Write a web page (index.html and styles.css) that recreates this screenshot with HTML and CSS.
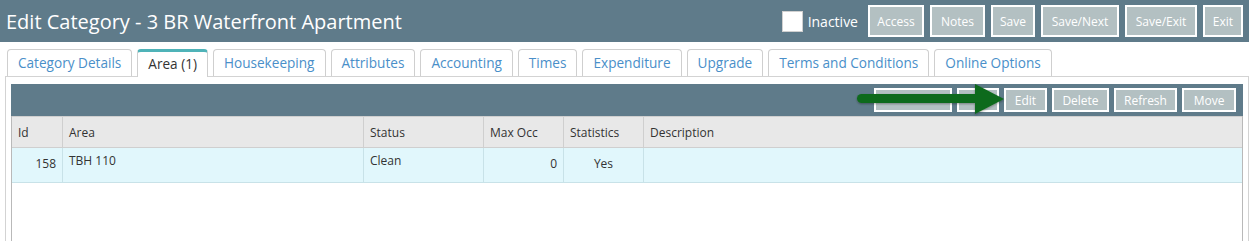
FILE: index.html
```html
<!DOCTYPE html>
<html>
<head>
<meta charset="utf-8">
<link rel="stylesheet" href="styles.css">
</head>
<body>
<header class="topbar">
  <h1 class="title">Edit Category - 3 BR Waterfront Apartment</h1>
  <div class="actions">
    <label class="inactive"><span class="checkbox"></span>Inactive</label>
    <button class="hbtn w-access">Access</button>
    <button class="hbtn w-notes">Notes</button>
    <button class="hbtn w-save">Save</button>
    <button class="hbtn w-savenext">Save/Next</button>
    <button class="hbtn w-saveexit">Save/Exit</button>
    <button class="hbtn w-exit">Exit</button>
  </div>
</header>

<nav class="tabs">
  <a class="tab">Category Details</a>
  <a class="tab active">Area (1)</a>
  <a class="tab">Housekeeping</a>
  <a class="tab">Attributes</a>
  <a class="tab">Accounting</a>
  <a class="tab">Times</a>
  <a class="tab">Expenditure</a>
  <a class="tab">Upgrade</a>
  <a class="tab">Terms and Conditions</a>
  <a class="tab">Online Options</a>
</nav>

<section class="panel">
  <div class="toolbar">
    <button class="tbtn w-addx">Add Existing</button>
    <button class="tbtn w-add">Add</button>
    <button class="tbtn w-edit">Edit</button>
    <button class="tbtn w-delete">Delete</button>
    <button class="tbtn w-refresh">Refresh</button>
    <button class="tbtn w-move">Move</button>
    <svg class="arrow" width="156" height="34" viewBox="0 0 156 34">
      <defs>
        <filter id="sh" x="-10%" y="-30%" width="120%" height="160%">
          <feDropShadow dx="0" dy="1" stdDeviation="1.2" flood-color="#000" flood-opacity="0.35"/>
        </filter>
      </defs>
      <g filter="url(#sh)" fill="#116a1d">
        <rect x="3" y="10" width="125" height="9" rx="4.5"/>
        <polygon points="121,0 150,15 121,30"/>
      </g>
    </svg>
  </div>
  <div class="grid">
    <div class="row head">
      <div class="c c-id">Id</div>
      <div class="c c-area">Area</div>
      <div class="c c-status">Status</div>
      <div class="c c-max">Max Occ</div>
      <div class="c c-stat">Statistics</div>
      <div class="c c-desc">Description</div>
    </div>
    <div class="row data">
      <div class="c c-id num mid">158</div>
      <div class="c c-area">TBH 110</div>
      <div class="c c-status">Clean</div>
      <div class="c c-max num mid">0</div>
      <div class="c c-stat center mid">Yes</div>
      <div class="c c-desc"></div>
    </div>
  </div>
</section>
</body>
</html>
```

FILE: styles.css
```css
* { box-sizing: border-box; }
html, body { margin: 0; padding: 0; }
body {
  font-family: "Open Sans", "Liberation Sans", sans-serif;
  background: #fff;
  color: #333;
  width: 1249px;
  height: 241px;
  overflow: hidden;
}
button { font-family: inherit; cursor: pointer; }

.topbar {
  height: 42px;
  background: #5f7b8a;
  display: flex;
  align-items: center;
  justify-content: space-between;
  padding: 0 6px 0 6px;
}
.title {
  margin: 0;
  font-size: 20px;
  font-weight: 400;
  color: #fff;
}
.actions {
  display: flex;
  align-items: center;
  gap: 6px;
}
.inactive {
  display: flex;
  align-items: center;
  color: #fff;
  font-size: 14px;
  margin-right: 4px;
}
.checkbox {
  width: 21px;
  height: 21px;
  background: #fff;
  border: 1px solid #d0d0d0;
  margin-right: 5px;
}
.hbtn {
  height: 32px;
  background: #b3c0c2;
  border: 2px solid #fff;
  color: #fff;
  font-size: 12px;
  padding: 0;
}
.w-access { width: 56px; }
.w-notes { width: 55px; }
.w-save { width: 44px; }
.w-savenext { width: 78px; }
.w-saveexit { width: 72px; }
.w-exit { width: 40px; }

.tabs {
  display: flex;
  gap: 5px;
  padding: 7px 0 0 7px;
  position: relative;
  z-index: 2;
  margin-bottom: -1px;
}
.tab {
  height: 27px;
  border: 1px solid #cfcfcf;
  border-bottom: none;
  border-radius: 4px 4px 0 0;
  padding: 0 10px;
  font-size: 13.6px;
  color: #4a8fc9;
  line-height: 25px;
  background: #fff;
}
.tab.active {
  color: #333;
  border-top: 3px solid #4fb3b8;
  line-height: 23px;
  height: 28px;
}

.panel {
  margin-left: 5px;
  width: 1244px;
  height: 166px;
  border: 1px solid #d3d3d3;
  border-bottom: none;
  padding: 7px 5px 0 5px;
  display: flex;
  flex-direction: column;
}
.toolbar {
  height: 32px;
  flex: none;
  background: #5f7b8a;
  display: flex;
  justify-content: flex-end;
  align-items: center;
  gap: 5px;
  padding-right: 7px;
  position: relative;
}
.tbtn {
  height: 24px;
  background: #b3c0c2;
  border: 2px solid #fff;
  color: #fff;
  font-size: 12px;
  padding: 0;
}
.w-addx { width: 78px; color: #b3c0c2; }
.w-add { width: 42px; color: #b3c0c2; }
.w-edit { width: 43px; }
.w-delete { width: 57px; }
.w-refresh { width: 63px; }
.w-move { width: 54px; }
.arrow {
  position: absolute;
  left: 843px;
  top: 0;
}

.grid {
  flex: 1;
  border: 1px solid #b9b9b9;
  border-top: none;
  border-bottom: none;
}
.row {
  display: flex;
  font-size: 12px;
  color: #333;
}
.row.head {
  height: 32px;
  background: #e8e8e8;
  border-bottom: 1px solid #cfcfcf;
  border-top: 1px solid #cfcfcf;
}
.row.head .c {
  display: flex;
  align-items: center;
  border-right: 1px solid #cfcfcf;
}
.row.data {
  height: 35px;
  background: #e1f7fc;
  border-bottom: 1px solid #c8e2e8;
}
.row.data .c {
  border-right: 1px solid #c8e2e8;
  padding-top: 4px;
}
.row.data .c.mid { padding-top: 7px; }
.c { padding: 0 6px; }
.c:last-child { border-right: none !important; }
.c-id { width: 51px; }
.c-area { width: 301px; }
.c-status { width: 120px; }
.c-max { width: 80px; }
.c-stat { width: 80px; }
.c-desc { flex: 1; }
.num { text-align: right; }
.center { text-align: center; }
```
